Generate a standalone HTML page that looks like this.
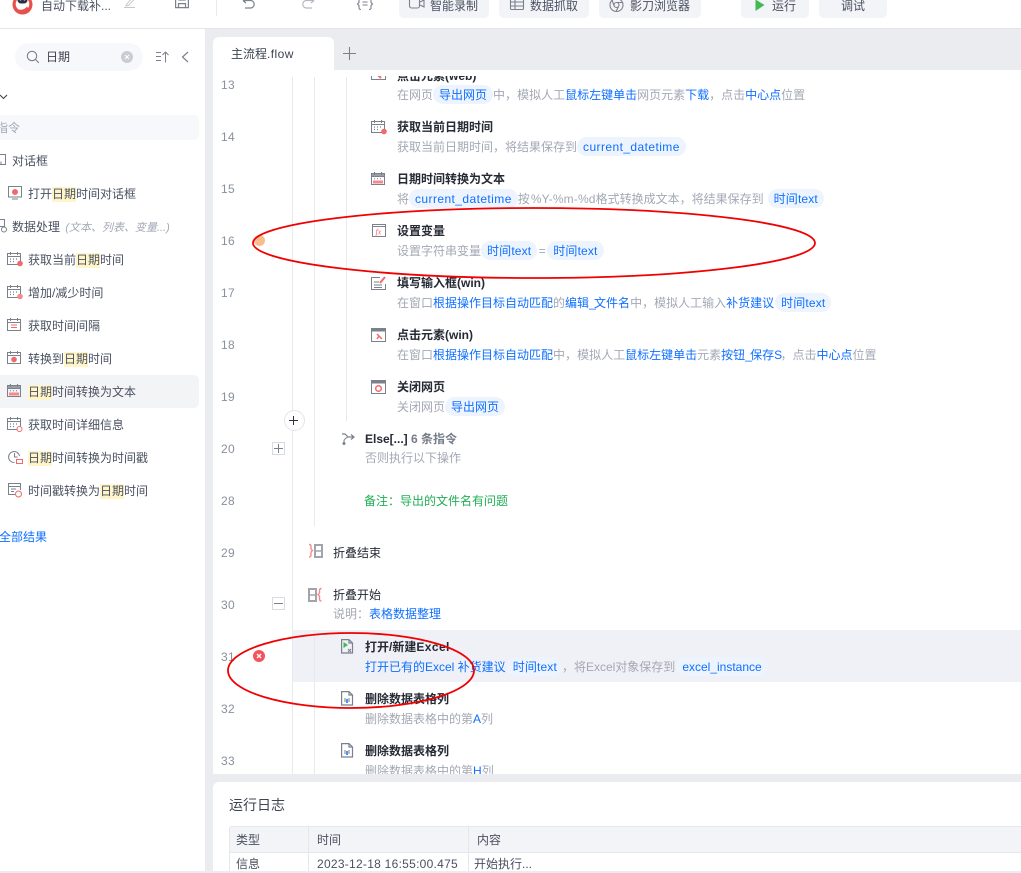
<!DOCTYPE html>
<html lang="zh"><head><meta charset="utf-8"><title>主流程.flow</title>
<style>
html,body{margin:0;padding:0;background:#ebecf0}
body{width:1021px;height:871px;position:relative;overflow:hidden;font:12px/18px "Liberation Sans","Noto Sans CJK SC",sans-serif;color:#4a5161}
.a{position:absolute}
.t{position:absolute;white-space:nowrap}
.btn{position:absolute;top:-12px;height:30px;background:#f3f4f8;border-radius:5px}
.bt{position:absolute;white-space:nowrap;top:-3px;color:#4a5161;line-height:18px}
.n{position:absolute;left:221px;color:#8a909c;width:20px;white-space:nowrap;letter-spacing:.3px}
.h{font-weight:700;color:#252a35;position:absolute;white-space:nowrap}
.d{position:absolute;white-space:nowrap;color:#a3a8b4;height:19px;line-height:18px}
.b{color:#0f6fff}
.c{color:#0f6fff;background:#edf4fe;border-radius:10px;padding:3px 6px 2px}
.l{letter-spacing:.42px}
.l1{letter-spacing:.15px}
.u{letter-spacing:-1.7px}
.p{font-family:"Noto Sans CJK TC",sans-serif}
.s{position:absolute;left:28px;white-space:nowrap;color:#4a5161}
mark{background:#fff5c9;color:#4a5161;display:inline-block;height:15px;line-height:15px}
svg{position:absolute;overflow:visible}
.v{position:absolute;width:1px;background:#e8e9ee}
</style></head><body>

<!-- top bar -->
<div class="a" style="left:0;top:0;width:1021px;height:28px;background:#fff;border-bottom:1px solid #e3e5ea"></div>
<svg style="left:12px;top:-6px" width="21" height="21" viewBox="0 0 21 21"><circle cx="10.500" cy="10.500" r="10" fill="#e8504c"/><circle cx="10.500" cy="10" r="6.800" fill="#fff"/><path d="M7 15.500q5 1 8-3l2 3-4 3.500-4-.5z" fill="#e8504c"/><rect x="5.500" y="1.500" width="10" height="8" rx="3.500" fill="#2b3040"/><circle cx="8.500" cy="5.500" r="1" fill="#fff"/><circle cx="12.500" cy="5.500" r="1" fill="#fff"/></svg>
<div class="t" style="left:41px;top:-3px;color:#4a5161">自动下载补...</div>
<svg style="left:124px;top:-3px" width="12" height="12" fill="none" stroke="#c4c7ce"><path d="M2.500 7.500 8 1l2 1.500-5.500 6-2.500.5zM0 10.500h11"/></svg>
<svg style="left:175px;top:-2px" width="14" height="12" fill="none" stroke="#7a808c" stroke-width="1.200"><path d="M.6-.500v10.100h12.800V1L11.500-.500zM3.500 9.600V5.600h7v4M4 -.500v2.500h6v-2.500"/></svg>
<div class="v" style="left:216px;top:0;height:16px"></div>
<svg style="left:241px;top:-1px" width="16" height="12" fill="none" stroke="#7a808c" stroke-width="1.200"><path d="M2 1.500h8a3.800 3.800 0 0 1 0 7.500H4M2 1.500l3-2.500M2 1.500l3 2.500"/></svg>
<svg style="left:300px;top:-1px" width="16" height="12" fill="none" stroke="#b5b8c0" stroke-width="1.200"><path d="M14 1.500H6a3.800 3.800 0 0 0 0 7.500h6M14 1.500l-3-2.500M14 1.500l-3 2.500"/></svg>
<svg style="left:357px;top:-1px" width="16" height="12" fill="none" stroke="#7a808c" stroke-width="1.100"><path d="M4-1Q2-1 2 1v2.500L.5 5 2 6.500V9q0 1.500 2 1.500M12-1q2 0 2 2v2.500L15.500 5 14 6.500V9q0 1.500-2 1.500M5.500 3h5M5.500 6h5"/></svg>

<div class="btn" style="left:399px;width:90px"></div>
<svg style="left:409px;top:-1px" width="16" height="12" fill="none" stroke="#7a808c" stroke-width="1.100"><rect x=".5" y="-1" width="10" height="10" rx="2"/><path d="m11 3 4-2v7l-4-2"/></svg>
<div class="bt" style="left:430px">智能录制</div>
<div class="btn" style="left:499px;width:90px"></div>
<svg style="left:510px;top:-1px" width="14" height="12" fill="none" stroke="#7a808c" stroke-width="1.100"><rect x=".5" y="-1" width="13" height="11.500" rx="1"/><path d="M.5 3h13M.5 7h13M5 -1v11.500"/></svg>
<div class="bt" style="left:530px">数据抓取</div>
<div class="btn" style="left:599px;width:102px"></div>
<svg style="left:609px;top:1px" width="15" height="12" fill="none" stroke="#7a808c" stroke-width="1.100"><circle cx="7.500" cy="4" r="6.500"/><circle cx="7.500" cy="4" r="2.500"/><path d="M7.500 1.500h6M5.300 5.300 3 -1M9.500 5.500 7 10.500"/></svg>
<div class="bt" style="left:630px">影刀浏览器</div>
<div class="btn" style="left:741px;width:68px"></div>
<svg style="left:755px;top:0" width="11" height="14"><path d="M.5-.500 9.500 5 .5 11z" fill="#3fb950"/></svg>
<div class="bt" style="left:772px">运行</div>
<div class="btn" style="left:819px;width:68px"></div>
<div class="bt" style="left:841px">调试</div>

<!-- sidebar -->
<div class="a" style="left:0;top:29px;width:205px;height:842px;background:#fff"></div>
<div class="a" style="left:15px;top:43px;width:128px;height:28px;background:#f7f8fb;border-radius:14px"></div>
<svg style="left:26px;top:50px" width="14" height="14" fill="none" stroke="#7b818d" stroke-width="1.100"><circle cx="6" cy="6" r="4.700"/><path d="m9.500 9.500 3.300 3.300"/></svg>
<div class="t" style="left:46px;top:47px;color:#3d4350;line-height:20px">日期</div>
<svg style="left:121px;top:51px" width="12" height="12"><circle cx="6" cy="6" r="6" fill="#c9ccd3"/><path d="m4 4 4 4M8 4 4 8" stroke="#fff" stroke-width="1.100"/></svg>
<svg style="left:156px;top:51px" width="14" height="12" fill="none" stroke="#7a808c"><path d="M0 1.500h5M0 5.500h5M0 9.500h5M9.500 11.500V1M6.500 4l3-3 3 3"/></svg>
<svg style="left:181px;top:51px" width="8" height="12" fill="none" stroke="#7a808c" stroke-width="1.200"><path d="M7 1 1.500 6 7 11"/></svg>
<svg style="left:0;top:94px" width="8" height="6" fill="none" stroke="#3d4350" stroke-width="1.100"><path d="m0 1 3.500 3.500L7 1"/></svg>
<div class="a" style="left:0;top:115px;width:199px;height:25px;background:#f7f8fb;border-radius:0 5px 5px 0"></div>
<div class="t" style="left:-4px;top:119px;color:#a3a8b4">指令</div>
<svg style="left:-4px;top:154px" width="11" height="12" fill="none" stroke="#7a808c"><rect x=".5" y=".5" width="9" height="10"/><path d="M5 10.500v-3"/></svg>
<div class="t" style="left:12px;top:152px">对话框</div>
<svg style="left:8px;top:186px" width="14" height="14" fill="none" stroke="#7a808c"><rect x=".5" y=".5" width="13" height="10.500"/><path d="M4 13h6"/><circle cx="7" cy="6" r="3" fill="#f2696b" stroke="none"/></svg>
<div class="s" style="top:185px">打开<mark>日期</mark>时间对话框</div>
<svg style="left:-2px;top:219px" width="12" height="14" fill="none" stroke="#7a808c"><rect x=".5" y=".5" width="6" height="7"/><circle cx="6" cy="10.500" r="2.500"/></svg>
<div class="t" style="left:12px;top:218px">数据处理 <span style="color:#a3a8b4;font-style:italic;font-size:11px;margin-left:2px">(文本、列表、变量...)</span></div>

<svg width="0" height="0" style="position:absolute"><defs>
<g id="cal" fill="none" stroke="#7a808c"><rect x=".5" y="1.500" width="13" height="11"/><path d="M.5 4.500h13M3.500 0v3M10.500 0v3"/><path d="M3 7h1M6 7h1M9 7h1M3 9.500h1M6 9.500h1" stroke-width="1.200"/></g>
<g id="cald" fill="none" stroke="#7a808c"><rect x=".5" y="1.500" width="13" height="11"/><rect x=".5" y="1.500" width="13" height="3" fill="#9a9ea8"/><path d="M3.500 0v3M10.500 0v3M3 6.800h1M6 6.800h1M9 6.800h1"/></g>
<g id="xl" fill="none" stroke="#7a808c" stroke-width="1.200"><path d="M.6.600H8L11.500 4v10H.6zM8 .6V4h3.500"/></g>
</defs></svg>

<svg style="left:7px;top:252px" width="16" height="16"><use href="#cal"/><circle cx="13" cy="11.500" r="2.800" fill="#f2696b"/></svg>
<div class="s" style="top:251px">获取当前<mark>日期</mark>时间</div>
<svg style="left:7px;top:285px" width="16" height="16"><use href="#cal"/><circle cx="13" cy="11.500" r="2.800" fill="#f58a8c"/></svg>
<div class="s" style="top:284px">增加/减少时间</div>
<svg style="left:7px;top:318px" width="16" height="16"><g fill="none" stroke="#7a808c"><rect x=".5" y="1.500" width="13" height="11"/><path d="M.5 4.500h13M3.500 0v3M10.500 0v3"/></g><path d="M4 7h6M4 9.500h6" stroke="#f2696b"/></svg>
<div class="s" style="top:317px">获取时间间隔</div>
<svg style="left:7px;top:351px" width="16" height="16"><g fill="none" stroke="#7a808c"><rect x=".5" y="1.500" width="13" height="11"/><path d="M.5 4.500h13M3.500 0v3M10.500 0v3"/></g><circle cx="7" cy="8.500" r="2.800" fill="#f2696b"/></svg>
<div class="s" style="top:350px">转换到<mark>日期</mark>时间</div>
<div class="a" style="left:0;top:375px;width:199px;height:33px;background:#f3f4f6;border-radius:0 5px 5px 0"></div>
<svg style="left:7px;top:384px" width="16" height="16"><use href="#cald"/><rect x="2" y="8.500" width="10" height="3" fill="#f58a8c"/></svg>
<div class="s" style="top:383px"><mark>日期</mark>时间转换为文本</div>
<svg style="left:7px;top:417px" width="16" height="16"><use href="#cal"/><circle cx="12.500" cy="12" r="2.500" fill="#fff" stroke="#f2696b"/></svg>
<div class="s" style="top:416px">获取时间详细信息</div>
<svg style="left:8px;top:450px" width="15" height="15" fill="none"><path d="M11.500 6a5.500 5.500 0 1 0-5 6.500M6.500 3v4h3" stroke="#7a808c"/><rect x="8.500" y="9.500" width="6" height="4" stroke="#f2696b"/></svg>
<div class="s" style="top:449px"><mark>日期</mark>时间转换为时间戳</div>
<svg style="left:8px;top:483px" width="15" height="15" fill="none"><path d="M7 11.500H.5v-11h12V7M.5 3.500h12M3 6h5M3 8.500h3" stroke="#7a808c"/><circle cx="10.500" cy="11" r="3" stroke="#f2696b"/></svg>
<div class="s" style="top:482px">时间戳转换为<mark>日期</mark>时间</div>
<div class="t b" style="left:-1px;top:528px">全部结果</div>

<!-- tabs -->
<div class="a" style="left:213px;top:37px;width:121px;height:34px;background:#fff;border-radius:6px 6px 0 0"></div>
<div class="t" style="left:231px;top:45px;color:#3d4350">主流程<span class="l">.flow</span></div>
<svg style="left:343px;top:47px" width="13" height="13" stroke="#7a808c" stroke-width="1.100"><path d="M6.500 0v13M0 6.500h13"/></svg>

<!-- editor -->
<div class="a" style="left:213px;top:70px;width:808px;height:704px;background:#fff"></div>
<div class="a" style="left:213px;top:76px;width:808px;height:20px;overflow:hidden">
 <div class="t" style="left:184px;top:-9px;font-weight:700;color:#252a35">点击元素(web)</div>
 <svg style="left:158px;top:-8px" width="16" height="14"><rect x=".5" y=".5" width="14" height="11" fill="none" stroke="#7a808c"/><path d="M5 5l5 5" stroke="#f2696b" stroke-width="2"/></svg>
</div>
<div class="a" style="left:293px;top:630px;width:728px;height:52px;background:#f0f1f6"></div>
<div class="v" style="left:292px;top:77px;height:697px"></div>
<div class="v" style="left:314px;top:77px;height:449px"></div>
<div class="v" style="left:314px;top:630px;height:144px"></div>
<div class="v" style="left:346px;top:77px;height:344px"></div>

<div class="n" style="top:76px">13</div><div class="n" style="top:128px">14</div><div class="n" style="top:180px">15</div><div class="n" style="top:232px">16</div><div class="n" style="top:284px">17</div><div class="n" style="top:336px">18</div><div class="n" style="top:388px">19</div><div class="n" style="top:440px">20</div><div class="n" style="top:492px">28</div><div class="n" style="top:544px">29</div><div class="n" style="top:596px">30</div><div class="n" style="top:648px">31</div><div class="n" style="top:700px">32</div><div class="n" style="top:752px">33</div>

<!-- row 13 -->
<div class="d" style="left:397px;top:86px">在网页<span class="c">导出网页</span>中<span class="p">，</span>模拟人工<span class="b">鼠标左键单击</span>网页元素<span class="b">下载</span><span class="p">，</span>点击<span class="b">中心点</span>位置</div>
<!-- 14 -->
<svg style="left:371px;top:120px" width="16" height="16"><use href="#cal"/><circle cx="13" cy="11.500" r="2.800" fill="#f2696b"/></svg>
<div class="h" style="left:397px;top:118px">获取当前日期时间</div>
<div class="d" style="left:397px;top:138px">获取当前日期时间<span class="p">，</span>将结果保存到<span class="c l">current_datetime</span></div>
<!-- 15 -->
<svg style="left:371px;top:172px" width="16" height="16"><use href="#cald"/><rect x="2" y="8.500" width="10" height="3" fill="#f58a8c"/></svg>
<div class="h" style="left:397px;top:170px">日期时间转换为文本</div>
<div class="d" style="left:397px;top:190px">将<span class="c l">current_datetime</span>按<span class="l1" style="margin-left:1px">%Y-%m-%d</span>格式转换成文本<span class="p">，</span>将结果保存到<span class="c l1" style="margin-left:4px">时间text</span></div>
<!-- 16 -->
<svg style="left:372px;top:224px" width="14" height="14"><rect x=".5" y=".5" width="13" height="12" fill="none" stroke="#7a808c"/><path d="M.5 2.500h13" stroke="#7a808c"/><text x="3.500" y="10.500" font-size="8" font-style="italic" fill="#f2696b" font-family="Liberation Serif">fx</text></svg>
<div class="h" style="left:397px;top:222px">设置变量</div>
<div class="d" style="left:397px;top:242px">设置字符串变量<span class="c l1">时间text</span><span style="display:inline-block;width:10px;text-align:center">=</span><span class="c l1">时间text</span></div>
<!-- 17 -->
<svg style="left:371px;top:276px" width="16" height="15" fill="none"><path d="M9 1.500H.5v12h14V8" stroke="#7a808c"/><path d="M3 6h5M3 9h8M3 11.500h8" stroke="#7a808c"/><path d="m9 7 5-6" stroke="#f2696b" stroke-width="2"/></svg>
<div class="h" style="left:397px;top:274px">填写输入框(win)</div>
<div class="d" style="left:397px;top:294px">在窗口<span class="b">根据操作目标自动匹配</span>的<span class="b">编辑<span class="u">_</span>文件名</span>中<span class="p">，</span>模拟人工输入<span class="b">补货建议</span><span class="c l1" style="margin-left:1px">时间text</span></div>
<!-- 18 -->
<svg style="left:371px;top:328px" width="15" height="15"><rect x=".5" y=".5" width="14" height="13" fill="none" stroke="#7a808c"/><rect x=".5" y=".5" width="14" height="3" fill="#7a808c"/><path d="m6 6 5 5M6 11l2-3" stroke="#f2696b" stroke-width="1.500"/></svg>
<div class="h" style="left:397px;top:326px">点击元素(win)</div>
<div class="d" style="left:397px;top:346px">在窗口<span class="b">根据操作目标自动匹配</span>中<span class="p">，</span>模拟人工<span class="b">鼠标左键单击</span>元素<span class="b">按钮<span class="u">_</span>保存<span class="u">S</span></span><span class="p">，</span>点击<span class="b">中心点</span>位置</div>
<!-- 19 -->
<svg style="left:371px;top:380px" width="15" height="15"><rect x=".5" y=".5" width="14" height="13" fill="none" stroke="#7a808c"/><rect x=".5" y=".5" width="14" height="3" fill="#7a808c"/><circle cx="7.500" cy="8.500" r="2.800" fill="none" stroke="#f2696b" stroke-width="1.500"/></svg>
<div class="h" style="left:397px;top:378px">关闭网页</div>
<div class="d" style="left:397px;top:398px">关闭网页<span class="c">导出网页</span></div>

<div class="a" style="left:284px;top:410px;width:19px;height:19px;border:1px solid #e3e5ea;border-radius:50%;background:#fff"></div>
<svg style="left:289px;top:416px" width="9" height="9" stroke="#2b3040"><path d="M4.500 0v9M0 4.500h9"/></svg>
<!-- 20 -->
<div class="a" style="left:272px;top:442px;width:11px;height:11px;border:1px solid #d9dbe0;background:#fff"></div>
<svg style="left:274px;top:444px" width="9" height="9" stroke="#7a808c"><path d="M4.500 0v9M0 4.500h9"/></svg>
<svg style="left:341px;top:432px" width="14" height="14" fill="none" stroke="#7a808c" stroke-width="1.200"><path d="M1 2h3l3 3h6M10 2.500 13 5l-3 2.500"/><path d="M3 12V9q0-2 4-4" stroke="#8a909c"/><circle cx="3" cy="11.500" r="1.500" fill="#7a808c" stroke="none"/></svg>
<div class="t" style="left:365px;top:430px;font-weight:700;color:#252a35">Else[...] <span style="color:#767c88">6 条指令</span></div>
<div class="d" style="left:365px;top:449px">否则执行以下操作</div>
<div class="t" style="left:364px;top:492px;color:#1fae54">备注<span class="p">：</span>导出的文件名有问题</div>
<!-- 29 -->
<svg style="left:308px;top:544px" width="14" height="14" fill="none"><path d="M1 .5q2 0 2 2v2.500l1.500 1.500L3 8v3q0 2-2 2" stroke="#f58a8c" stroke-width="1.400"/><rect x="7" y="1" width="7" height="12" stroke="#a0a4ad" stroke-width="2"/><path d="M7 7h7" stroke="#a0a4ad" stroke-width="1.500"/></svg>
<div class="t" style="left:333px;top:544px;color:#252a35">折叠结束</div>
<!-- 30 -->
<svg style="left:308px;top:588px" width="14" height="14" fill="none"><rect x="1" y="1" width="7" height="12" stroke="#a0a4ad" stroke-width="2"/><path d="M1 7h7" stroke="#a0a4ad" stroke-width="1.500"/><path d="M13.500 .5q-2 0-2 2v2.500L10 6.500 11.500 8v3q0 2 2 2" stroke="#f58a8c" stroke-width="1.400"/></svg>
<div class="a" style="left:272px;top:597px;width:11px;height:11px;border:1px solid #d9dbe0;background:#fff"></div>
<svg style="left:274px;top:603px" width="9" height="1" stroke="#7a808c"><path d="M0 .5h9"/></svg>
<div class="t" style="left:333px;top:586px;color:#252a35">折叠开始</div>
<div class="d" style="left:333px;top:605px">说明<span class="p">：</span><span class="b">表格数据整理</span></div>
<!-- 31 -->
<svg style="left:341px;top:639px" width="13" height="16"><use href="#xl"/><path d="M2.500 3v6l4.500-3z" fill="#3fb950"/><path d="m7 10 3 3M10 10l-3 3" stroke="#7a808c"/></svg>
<div class="h" style="left:365px;top:638px">打开/新建<span class="l">Excel</span></div>
<div class="d" style="left:365px;top:658px;color:#0f6fff">打开已有的Excel 补货建议<span class="c l1" style="margin-left:1px;padding-right:5px">时间text</span><span style="color:#a3a8b4"><span class="p">，</span>将Excel对象保存到</span><span class="c" style="margin-left:1px">excel_instance</span></div>
<!-- 32 -->
<svg style="left:341px;top:691px" width="13" height="16"><use href="#xl"/><path d="M4 7v4M8 7v4" stroke="#7a808c"/><path d="M6 8v4" stroke="#0f6fff" stroke-width="1.500"/></svg>
<div class="h" style="left:365px;top:690px">删除数据表格列</div>
<div class="d" style="left:365px;top:710px">删除数据表格中的第<span class="b">A</span>列</div>
<!-- 33 -->
<svg style="left:341px;top:743px" width="13" height="16"><use href="#xl"/><path d="M4 7v4M8 7v4" stroke="#7a808c"/><path d="M6 8v4" stroke="#0f6fff" stroke-width="1.500"/></svg>
<div class="h" style="left:365px;top:742px">删除数据表格列</div>
<div class="a" style="left:365px;top:762px;height:12px;overflow:hidden;white-space:nowrap;color:#a3a8b4">删除数据表格中的第<span class="b">H</span>列</div>

<!-- breakpoints -->
<div class="a" style="left:254px;top:235px;width:11px;height:11px;border-radius:50%;background:#f7bd8f"></div>
<svg style="left:253px;top:650px" width="12" height="12"><circle cx="6" cy="6" r="6" fill="#f4555a"/><path d="m4 4 4 4M8 4 4 8" stroke="#fff" stroke-width="1.300"/></svg>

<!-- log panel -->
<div class="a" style="left:213px;top:782px;width:808px;height:89px;background:#fff;border-radius:6px 0 0 0"></div>
<div class="t" style="left:229px;top:795px;font-size:14px;line-height:20px;color:#3d4350">运行日志</div>
<div class="a" style="left:229px;top:826px;width:792px;height:25px;background:#f3f4f7;border-top:1px solid #e6e7ec;border-bottom:1px solid #e6e7ec;border-left:1px solid #e6e7ec;border-radius:3px 0 0 0"></div>
<div class="a" style="left:229px;top:852px;width:1px;height:19px;background:#e6e7ec"></div>
<div class="v" style="left:308px;top:826px;height:45px;background:#e6e7ec"></div>
<div class="v" style="left:468px;top:826px;height:45px;background:#e6e7ec"></div>
<div class="t" style="left:236px;top:831px;color:#4a5161">类型</div>
<div class="t" style="left:317px;top:831px;color:#4a5161">时间</div>
<div class="t" style="left:477px;top:831px;color:#4a5161">内容</div>
<div class="t" style="left:236px;top:855px;color:#4a5161">信息</div>
<div class="t" style="left:317px;top:855px;color:#4a5161;letter-spacing:.27px">2023-12-18 16:55:00.475</div>
<div class="t" style="left:474px;top:855px;color:#4a5161">开始执行...</div>

<!-- annotations -->
<svg style="left:0;top:0;pointer-events:none" width="1021" height="871" fill="none" stroke="#f00000" stroke-width="1.800"><ellipse cx="534" cy="243" rx="281" ry="35"/><ellipse cx="351" cy="670.500" rx="123" ry="37.500"/></svg>
</body></html>
